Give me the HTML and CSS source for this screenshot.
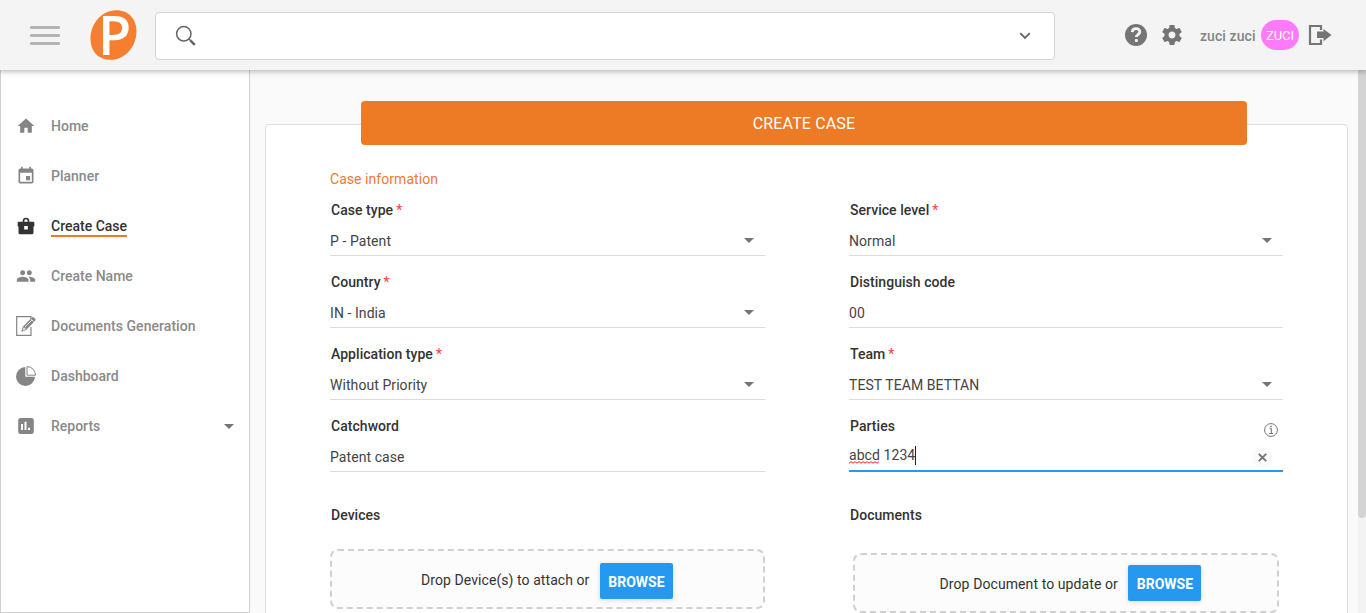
FILE: index.html
```html
<!DOCTYPE html>
<html lang="en">
<head>
<meta charset="utf-8">
<title>Create Case</title>
<link rel="stylesheet" href="styles.css">
</head>
<body>
<div class="app">
  <header class="topbar">
    <button class="menu-btn" aria-label="Menu"><span></span><span></span><span></span></button>
    <svg class="logo" width="48" height="50" viewBox="0 0 48 50">
      <path d="M26 .3C38.500 0 46.500 9 46.500 21 46.500 37 35 50 20.500 49.800 8 49.800.500 41 .500 29 .500 14 11 .800 26 .300Z" fill="#f57e31"/>
      <text class="logo-letter" x="8" y="45">P</text>
    </svg>
    <div class="search">
      <svg width="22" height="22" viewBox="0 0 22 22" fill="none" stroke="#666"><circle cx="8.800" cy="8.800" r="7.200" stroke-width="1.500"/><path d="M14 14l1.500 1.500" stroke-width="1.500"/><path d="M15.300 15.300l4.500 4.500" stroke-width="2.600"/></svg>
      <svg width="12" height="8" viewBox="0 0 12 8" fill="none" stroke="#666" stroke-width="1.900"><path d="M1.200 1.200L6 6l4.800-4.800"/></svg>
    </div>
    <div class="tools">
      <svg class="help" width="22" height="22" viewBox="0 0 22 22"><circle cx="11" cy="11" r="11" fill="#757575"/><path d="M7.200 8.100C7.500 3.200 15.200 3.700 14.800 8c-.2 2.600-3.500 2.500-3.500 5" fill="none" stroke="#f4f4f4" stroke-width="2.800"/><rect x="9.900" y="15" width="3" height="3" rx="1" fill="#f4f4f4"/></svg>
      <svg class="gear" width="24" height="24" viewBox="0 0 24 24" fill="#757575"><path d="M19.430 12.980c.04-.32.070-.64.070-.98s-.03-.66-.07-.98l2.110-1.650c.19-.15.240-.42.120-.64l-2-3.460c-.12-.22-.39-.3-.61-.22l-2.490 1c-.52-.4-1.080-.73-1.690-.98l-.38-2.650C14.460 2.180 14.250 2 14 2h-4c-.25 0-.46.180-.49.420l-.38 2.650c-.61.250-1.170.590-1.690.980l-2.490-1c-.23-.09-.49 0-.61.220l-2 3.460c-.13.220-.07.490.120.640l2.110 1.650c-.04.320-.07.650-.07.980s.03.660.070.980l-2.110 1.650c-.19.150-.24.420-.12.640l2 3.460c.12.220.39.300.61.220l2.490-1c.52.400 1.080.730 1.690.980l.38 2.650c.03.240.240.420.490.420h4c.25 0 .46-.18.490-.42l.38-2.650c.61-.25 1.170-.59 1.690-.98l2.490 1c.23.090.49 0 .61-.22l2-3.460c.12-.22.070-.49-.12-.64l-2.110-1.650zM12 15.500c-1.930 0-3.500-1.570-3.500-3.500s1.570-3.500 3.500-3.500 3.500 1.570 3.500 3.500-1.570 3.500-3.500 3.500z"/></svg>
      <span class="user">zuci zuci</span>
      <span class="avatar">ZUCI</span>
      <svg class="logout" width="24" height="22" viewBox="0 0 24 22"><path d="M13 6V2H2v18H13V15.500" fill="none" stroke="#757575" stroke-width="2.200"/><path d="M9 7.500h6.500V5L23.500 11l-8 6.200V14H9z" fill="#757575"/></svg>
    </div>
  </header>
  <div class="body">
    <nav class="sidebar">
      <a class="nav-item"><svg width="20" height="20" viewBox="0 0 24 24" fill="#858585"><path d="M10 20v-6h4v6h5v-8h3L12 3 2 12h3v8z"/></svg><span>Home</span></a>
      <a class="nav-item"><svg width="20" height="20" viewBox="0 0 24 24" fill="#858585"><path d="M17 12h-5v5h5v-5zM16 1v2H8V1H6v2H5c-1.110 0-2 .9-2 2v14c0 1.100.890 2 2 2h14c1.100 0 2-.9 2-2V5c0-1.100-.9-2-2-2h-1V1h-2zm3 18H5V8h14v11z"/></svg><span>Planner</span></a>
      <a class="nav-item active"><svg width="20" height="20" viewBox="0 0 24 24"><path d="M2 8q0-1 1-1h5V6a4 4 0 0 1 8 0v1h5q1 0 1 1v4.500H21V20q0 2-2 2H5q-2 0-2-2v-7.500H2zM10 7h4V6a2 2 0 0 0-4 0zM9.800 12v4.200h4.400V12z" fill="#333" fill-rule="evenodd"/></svg><span>Create Case</span></a>
      <a class="nav-item"><svg width="20" height="20" viewBox="0 0 24 24" fill="#858585"><path d="M16 11c1.660 0 2.990-1.340 2.990-3S17.660 5 16 5s-3 1.340-3 3 1.340 3 3 3zm-8 0c1.660 0 2.990-1.340 2.990-3S9.660 5 8 5 5 6.340 5 8s1.340 3 3 3zm0 2c-2.330 0-7 1.170-7 3.500V19h14v-2.500c0-2.330-4.670-3.500-7-3.500zm8 0c-.29 0-.62.020-.97.050 1.160.840 1.970 1.970 1.970 3.450V19h6v-2.500c0-2.330-4.670-3.500-7-3.500z"/></svg><span>Create Name</span></a>
      <a class="nav-item docs"><svg width="20" height="20" viewBox="0 0 20 20"><path d="M15 4V.7H.7v18.600H15V11" fill="none" stroke="#858585" stroke-width="1.200"/><path d="M5.300 16l1.500-5.300L16 1.500q1-.8 2 0l1.200 1.200q.8 1 0 2L10 14z" fill="#858585"/><path d="M7.200 14.200l.8-2.500 1.300 1.300zM9 11l7-7M15.200 3.200l2.600 2.600" fill="none" stroke="#fff" stroke-width=".8"/></svg><span>Documents Generation</span></a>
      <a class="nav-item"><svg width="20" height="20" viewBox="0 0 20 20"><path d="M9.300 1v9.700H19A9.500 9.500 0 1 1 9.300 1z" fill="#858585"/><path d="M11 .6v8.600h8.500A8.500 8.500 0 0 0 11 .6z" fill="#fff" stroke="#858585"/></svg><span>Dashboard</span></a>
      <a class="nav-item"><svg width="20" height="20" viewBox="0 0 20 20"><path d="M4.500 2h11q2.300 0 2.300 2.300v11.400q0 2.300-2.300 2.300h-11q-2.300 0-2.300-2.300V4.300Q2.200 2 4.500 2z" fill="#858585"/><path d="M6 8v6M9.500 5.700V14M13 11.700V14" stroke="#fff" stroke-width="2"/></svg><span>Reports</span><i class="caret"></i></a>
    </nav>
    <main class="content">
      <section class="card">
        <h1 class="title">CREATE CASE</h1>
        <h2 class="section-title">Case information</h2>
        <div class="form">
          <div class="field"><label>Case type <b>*</b></label><div class="value">P - Patent<i class="caret"></i></div></div>
          <div class="field"><label>Service level <b>*</b></label><div class="value">Normal<i class="caret"></i></div></div>
          <div class="field"><label>Country <b>*</b></label><div class="value">IN - India<i class="caret"></i></div></div>
          <div class="field"><label>Distinguish code</label><div class="value">00</div></div>
          <div class="field"><label>Application type <b>*</b></label><div class="value">Without Priority<i class="caret"></i></div></div>
          <div class="field"><label>Team <b>*</b></label><div class="value">TEST TEAM BETTAN<i class="caret"></i></div></div>
          <div class="field"><label>Catchword</label><div class="value">Patent case</div></div>
          <div class="field">
            <label class="with-info">Parties<svg width="14" height="14" viewBox="0 0 14 14" fill="none" stroke="#757575"><circle cx="7" cy="7" r="6.400"/><path d="M5.500 5.800H7.300V10.500M5.300 10.500H9" stroke-width="1.100"/><path d="M6.300 3.500H7.800" stroke-width="1.400"/></svg></label>
            <div class="value focused"><span class="entry"><span class="misspelt">abcd<svg width="31" height="3" viewBox="0 0 31 3" fill="none" stroke="#f22" stroke-width="1"><path d="M0 2.200l2-1.500 2 1.500 2-1.500 2 1.500 2-1.500 2 1.500 2-1.500 2 1.500 2-1.500 2 1.500 2-1.500 2 1.500 2-1.500 2 1.500 2-1.500"/></svg></span> 1234</span><i class="cursor"></i><span class="clear"><svg width="9" height="9" viewBox="0 0 9 9" stroke="#757575" stroke-width="1.900"><path d="M.8.800l7.400 7.400M8.200.800L.8 8.200"/></svg></span></div>
          </div>
        </div>
        <div class="uploads">
          <div class="upload"><label>Devices</label><div class="drop"><span>Drop Device(s) to attach or</span><button class="browse">BROWSE</button></div></div>
          <div class="upload documents"><label>Documents</label><div class="drop"><span>Drop Document to update or</span><button class="browse">BROWSE</button></div></div>
        </div>
      </section>
    </main>
    <div class="scrollbar"><div class="thumb"></div></div>
  </div>
</div>
</body>
</html>
```
FILE: styles.css
```css
* { box-sizing: border-box; }
body { margin: 0; font: 14px/20px Roboto, sans-serif; color: #333; background: #fafafa; }
svg { display: block; flex: none; }
button { border: 0; font: inherit; }
.app { height: 613px; overflow: hidden; display: flex; flex-direction: column; }

.topbar { height: 70px; flex: none; display: flex; align-items: center; background: #f4f4f4; padding-left: 30px; box-shadow: 0 1px 5px 1px rgba(0,0,0,.25); position: relative; z-index: 2; }
.menu-btn { display: flex; flex-direction: column; gap: 5px; width: 30px; padding: 0; background: none; }
.menu-btn span { height: 2.600px; border-radius: 1.300px; background: #b4b4b4; }
.menu-btn span { min-height: 3px; }
.logo { margin-left: 30px; overflow: visible; }
.logo-letter { font: 600 54px "Open Sans", sans-serif; fill: #fff; }
.search { width: 900px; height: 48px; margin: 2px 0 0 17px; border: 1px solid #d4d4d4; border-radius: 4px; background: #fff; display: flex; align-items: center; justify-content: space-between; padding: 0 23px 0 19px; }
.tools { display: flex; align-items: center; margin-left: 70px; }
.help { margin-top: -1px; }
.gear { margin-left: 13px; }
.user { margin-left: 16px; width: 61px; font-weight: 500; color: #858585; white-space: nowrap; padding-top: 2px; letter-spacing: .08px; }
.avatar { width: 38px; height: 30px; border-radius: 15px; background: #ff7afb; color: #fff; font-size: 13px; line-height: 31px; text-align: center; }
.logout { margin-left: 9px; }

.body { flex: 1; min-height: 0; display: flex; }
.sidebar { width: 250px; flex: none; background: #fff; border: 1px solid #d0d0d0; border-top: 0; padding: 31px 15px 0; }
.nav-item { display: flex; align-items: center; height: 50px; gap: 15px; font-weight: 500; color: #8a8a8a; }
.nav-item .caret { margin-left: auto; }
.docs span { letter-spacing: .05px; }
.active { color: #333; }
.active span { border-bottom: 2px solid #ed7a25; line-height: 18px; padding-top: 2px; }
.caret { width: 0; height: 0; border: 5px solid transparent; border-top-color: #757575; border-bottom: 0; }

.content { flex: 1; padding: 54px 10px 0 15px; }
.card { height: 700px; background: #fff; border: 1px solid #ddd; border-radius: 4px; padding: 0 64px; }
.title { height: 44px; margin: -24px 36px 0 31px; width: 886px; background: #ed7a25; border-radius: 4px; color: #fff; text-align: center; font: 400 16px/45px Roboto, sans-serif; letter-spacing: .15px; }
.section-title { margin: 24px 0 11px; font: 400 14px/20px Roboto, sans-serif; color: #ed7a35; letter-spacing: .05px; }
.form, .uploads { display: grid; grid-template-columns: 435px 434px; column-gap: 84px; }
.field { height: 72px; }
label { display: block; padding-left: 1px; font-weight: 500; height: 20px; letter-spacing: .04px; }
label b { color: #f44336; font-weight: 400; margin-left: -.5px; }
.value { height: 36px; border-bottom: 1px solid #ddd; display: flex; align-items: center; padding: 7px 11px 0 0; color: #444; letter-spacing: .07px; }
.value .caret { margin-left: auto; margin-top: -2px; }
.with-info { display: flex; justify-content: space-between; padding-right: 5px; }
.with-info svg { margin-top: 7px; }
.focused { height: 36px; border-bottom: 2px solid #2599ef; padding: 4px 10px 0 0; }
.entry { white-space: pre; }
.misspelt { position: relative; }
.misspelt svg { position: absolute; left: 0; bottom: -1px; }
.cursor { width: 1px; height: 19px; background: #222; }
.clear { width: 21px; height: 21px; border-radius: 50%; background: #fafafa; margin: 4px 0 0 auto; display: flex; align-items: center; justify-content: center; }
.uploads { padding-top: 17px; }
.drop { height: 60px; margin-top: 24px; border: 2px dashed #d0d0d0; border-radius: 8px; background: #fcfcfc; display: flex; align-items: center; justify-content: center; gap: 10.500px; padding-top: 2px; padding-right: 1px; }
.drop span { letter-spacing: .07px; }
.drop .browse { margin-top: 2px; }
.documents .drop { margin: 28px 4px 0; padding-left: 10px; }
.documents .drop span { letter-spacing: .09px; }
.documents .browse { margin-top: -2px; }
.browse { width: 73px; height: 36px; border-radius: 2px; padding: 2px 0 0; background: #2599ef; color: #fff; font-weight: 700; box-shadow: 0 1px 5px rgba(0,0,0,.15); }

.scrollbar { width: 8px; flex: none; background: #f3f3f3; }
.thumb { height: 448px; background: #d4d4d4; border-radius: 0 0 4px 4px; }
```
